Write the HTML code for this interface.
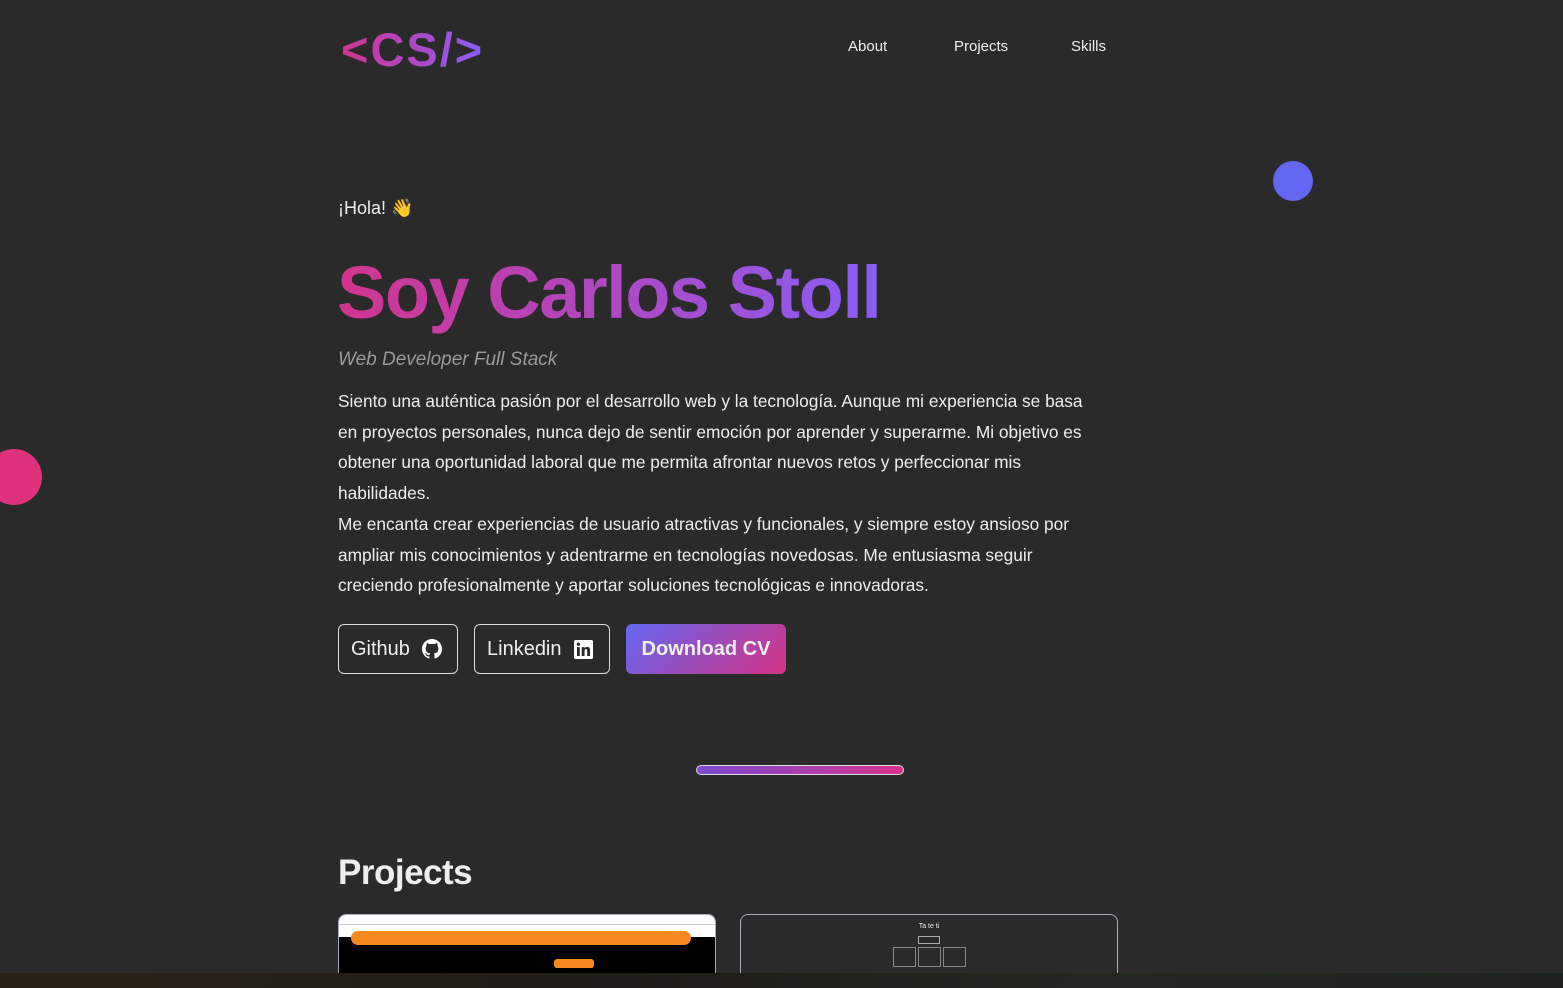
<!DOCTYPE html>
<html><head><meta charset="utf-8"><style>
*{margin:0;padding:0;box-sizing:border-box}
body{width:1563px;height:988px;background:#2a2a2a;font-family:"Liberation Sans",sans-serif;color:#f0f0f0;position:relative;overflow:hidden}
.grad{background:linear-gradient(90deg,#d2348f,#8b5cf6);-webkit-background-clip:text;background-clip:text;color:transparent}
.logo{position:absolute;left:341px;top:22px;font-size:47px;font-weight:bold;letter-spacing:2px}
.nav{position:absolute;top:38px;font-size:15px;color:#eee}
.hola{position:absolute;left:338px;top:198px;font-size:18px}
h1{position:absolute;left:337px;top:250px;font-size:74px;font-weight:900;letter-spacing:-1.5px;white-space:nowrap}
.sub{position:absolute;left:338px;top:349px;font-size:19px;font-style:italic;color:#9a9a9a}
.p{position:absolute;left:338px;top:386px;width:800px;font-size:17.3px;line-height:30.7px;color:#eee;white-space:nowrap}
.btn{position:absolute;top:624px;height:50px;border:1.5px solid #ddd;border-radius:6px;font-size:20px;display:flex;align-items:center;padding:0 12px;gap:12px}
.cv{border:none;background:linear-gradient(135deg,#6366f1,#d63384);font-weight:bold}
.bar{position:absolute;left:696px;top:765px;width:208px;height:10px;border-radius:5px;border:1.5px solid #ddd;background:linear-gradient(90deg,#7e4bd6,#d6338a)}
h2{position:absolute;left:338px;top:853px;font-size:35px;font-weight:bold;color:#eee;letter-spacing:-0.5px}
.card{position:absolute;top:914px;width:378px;height:70px;border:1px solid #aab;border-radius:8px;overflow:hidden}
.dot{position:absolute;border-radius:50%}
.task{position:absolute;left:0;top:973px;width:1563px;height:15px;background:linear-gradient(90deg,#2a2218,#1e1c18 40%,#252822 70%,#1e221e)}
</style></head><body>
<div class="logo grad">&lt;CS/&gt;</div>
<div class="nav" style="left:848px">About</div>
<div class="nav" style="left:954px">Projects</div>
<div class="nav" style="left:1071px">Skills</div>
<div class="dot" style="left:1273px;top:161px;width:40px;height:40px;background:#6366f1"></div>
<div class="dot" style="left:-14px;top:449px;width:56px;height:56px;background:#e0317d"></div>
<div class="hola">¡Hola! 👋</div>
<h1 class="grad">Soy Carlos Stoll</h1>
<div class="sub">Web Developer Full Stack</div>
<div class="p">Siento una auténtica pasión por el desarrollo web y la tecnología. Aunque mi experiencia se basa<br>en proyectos personales, nunca dejo de sentir emoción por aprender y superarme. Mi objetivo es<br>obtener una oportunidad laboral que me permita afrontar nuevos retos y perfeccionar mis<br>habilidades.<br>Me encanta crear experiencias de usuario atractivas y funcionales, y siempre estoy ansioso por<br>ampliar mis conocimientos y adentrarme en tecnologías novedosas. Me entusiasma seguir<br>creciendo profesionalmente y aportar soluciones tecnológicas e innovadoras.</div>
<div class="btn" style="left:338px;width:120px">Github <svg width="20" height="20" viewBox="0 0 16 16" fill="#fff"><path d="M8 0C3.58 0 0 3.58 0 8c0 3.54 2.29 6.530 5.47 7.59.4.07.55-.17.55-.38v-1.33c-2.23.48-2.7-1.07-2.7-1.07-.36-.92-.89-1.170-.89-1.17-.73-.5.05-.49.05-.49.8.06 1.23.83 1.23.83.72 1.23 1.88.87 2.34.67.07-.52.28-.87.51-1.07-1.78-.2-3.65-.89-3.65-3.95 0-.87.31-1.59.82-2.15-.08-.2-.36-1.02.08-2.12 0 0 .67-.21 2.2.82A7.6 7.6 0 0 1 8 3.87c.68 0 1.36.09 2 .27 1.53-1.04 2.2-.82 2.2-.82.44 1.1.16 1.92.08 2.12.51.56.82 1.27.82 2.15 0 3.07-1.87 3.75-3.65 3.95.29.25.54.73.54 1.48v2.2c0 .21.15.46.55.38A8 8 0 0 0 16 8c0-4.42-3.58-8-8-8z"/></svg></div>
<div class="btn" style="left:474px;width:136px">Linkedin <svg width="19" height="19" viewBox="0 0 16 16"><rect width="16" height="16" rx="1.5" fill="#fff"/><rect x="2.5" y="6" width="2.4" height="7.5" fill="#2a2a2a"/><circle cx="3.7" cy="3.6" r="1.4" fill="#2a2a2a"/><path d="M6.5 6h2.3v1c.4-.7 1.2-1.2 2.3-1.2 1.9 0 2.4 1.2 2.4 2.9v4.8h-2.4V9.2c0-.9-.2-1.5-1-1.5s-1.2.6-1.2 1.5v4.3H6.5z" fill="#2a2a2a"/></svg></div>
<div class="btn cv" style="left:626px;width:160px;justify-content:center">Download CV</div>
<div class="bar"></div>
<h2>Projects</h2>
<div class="card" style="left:338px;background:#000"><div style="height:9px;background:#fff"></div><div style="height:13px;background:#fff;border-top:1px solid #ccc"></div><div style="position:absolute;left:12px;top:16px;width:340px;height:14px;background:#f5891f;border-radius:7px"></div><div style="position:absolute;left:215px;top:44px;width:40px;height:9px;background:#f5891f;border-radius:3px"></div></div>
<div class="card" style="left:740px;background:#2a2a2a;font-size:7px;text-align:center;padding-top:8px">Ta te ti<div style="margin:6px auto 0;width:22px;height:8px;border:1px solid #aaa"></div><div style="display:flex;justify-content:center;gap:2px;margin-top:3px"><div style="width:23px;height:20px;border:1px solid #888"></div><div style="width:23px;height:20px;border:1px solid #888"></div><div style="width:23px;height:20px;border:1px solid #888"></div></div></div>
<div class="task"></div>
</body></html>
